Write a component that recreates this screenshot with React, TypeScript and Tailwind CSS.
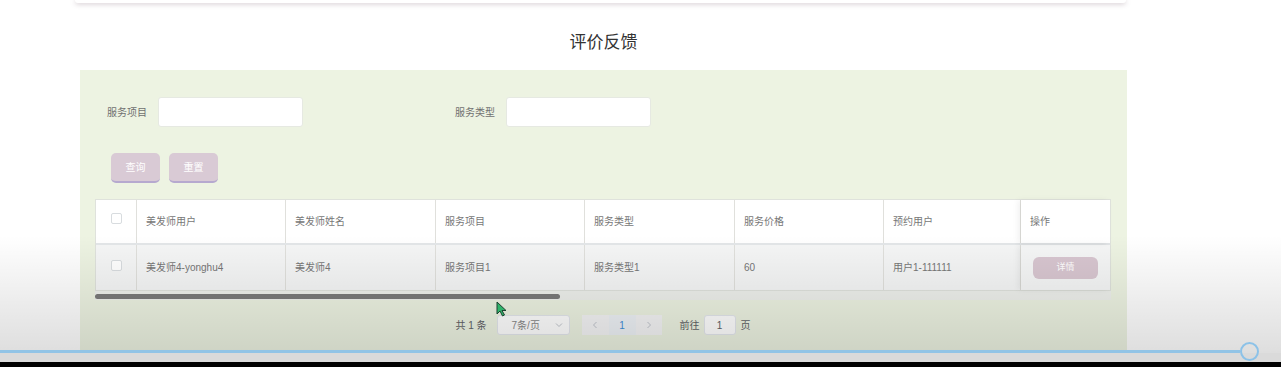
import React from 'react';

const cols = [
  { key: 'user', title: '美发师用户', w: 'w-[149px]' },
  { key: 'name', title: '美发师姓名', w: 'w-[150px]' },
  { key: 'item', title: '服务项目', w: 'w-[149px]' },
  { key: 'type', title: '服务类型', w: 'w-[150px]' },
  { key: 'price', title: '服务价格', w: 'w-[149px]' },
  { key: 'booker', title: '预约用户', w: 'w-[137px]' },
];

const row: Record<string, string> = {
  user: '美发师4-yonghu4',
  name: '美发师4',
  item: '服务项目1',
  type: '服务类型1',
  price: '60',
  booker: '用户1-111111',
};

function Checkbox() {
  return <div className="w-[11px] h-[11px] rounded-[2px] border border-[#d8dcdf] bg-white" />;
}

export default function App() {
  return (
    <div className="relative w-[1281px] h-[367px] overflow-hidden bg-white font-['Liberation_Sans','Noto_Sans_CJK_SC',sans-serif]">
      {/* tail of the card above */}
      <div className="ml-[75px] w-[1051px] h-[3px] bg-white rounded-b-[3px] shadow-[0_1px_5px_rgba(120,95,110,0.4)]" />

      <h2 className="ml-[80px] w-[1047px] mt-[30px] text-center text-[17px] leading-[20px] text-[#333]">评价反馈</h2>

      <div className="ml-[80px] mt-[17px] w-[1047px] h-[300px] bg-[#edf3e2] pt-[27px] pl-[15px] pr-[16px]">
        {/* search */}
        <div className="flex items-center h-[30px] pl-[12px] text-[10px] text-[#707070]">
          <span className="w-[40px]">服务项目</span>
          <div className="ml-[11px] w-[145px] h-[30px] rounded-[3px] bg-white border border-[#e6e9e2]" />
          <span className="ml-[152px] w-[40px]">服务类型</span>
          <div className="ml-[11px] w-[145px] h-[30px] rounded-[3px] bg-white border border-[#e6e9e2]" />
        </div>

        <div className="flex gap-[9px] mt-[26px] pl-[16px]">
          <button className="w-[49px] h-[30px] rounded-[5px] bg-[#d9cad5] border-b-2 border-[#b6a9cf] text-white text-[10px]">查询</button>
          <button className="w-[49px] h-[30px] rounded-[5px] bg-[#d9cad5] border-b-2 border-[#b6a9cf] text-white text-[10px]">重置</button>
        </div>

        {/* table */}
        <div className="mt-[16px] w-[1016px] border border-[#dfe2dc] text-[10px] text-[#777]">
          <div className="flex h-[45px] bg-white border-b-2 border-[#e3e6e8]">
            <div className="w-[41px] flex justify-center pt-[13px] border-r border-[#e0e0dc]">
              <Checkbox />
            </div>
            {cols.map((c) => (
              <div key={c.key} className={`${c.w} flex items-center pl-[9px] border-r border-[#e0e0dc]`}>
                {c.title}
              </div>
            ))}
            <div className="flex-1 flex items-center pl-[9px] shadow-[-3px_0_6px_rgba(0,0,0,0.06)]">操作</div>
          </div>
          <div className="flex h-[45px] bg-[#f5f6f6]">
            <div className="w-[41px] flex justify-center pt-[15px] border-r border-[#e0e0dc]">
              <Checkbox />
            </div>
            {cols.map((c) => (
              <div key={c.key} className={`${c.w} flex items-center pl-[9px] border-r border-[#e0e0dc]`}>
                {row[c.key]}
              </div>
            ))}
            <div className="flex-1 flex items-center pl-[12px] shadow-[-3px_0_6px_rgba(0,0,0,0.06)]">
              <button className="w-[65px] h-[22px] rounded-[6px] bg-[#d8c6d0] text-white text-[9px]">详情</button>
            </div>
          </div>
        </div>
        <div className="w-[1016px] h-[9px] pt-[3px] bg-[#eef0ec]">
          <div className="w-[465px] h-[5px] rounded-full bg-[#7a7a7a]" />
        </div>

        {/* pagination */}
        <div className="flex items-center justify-center mt-[15px] h-[20px] text-[10px] text-[#606266]">
          <span>共 1 条</span>
          <div className="ml-[10px] w-[73px] h-[20px] flex items-center justify-between pl-[14px] pr-[6px] bg-white border border-[#e4e7ed] rounded-[3px] text-[#888]">
            <span>7条/页</span>
            <svg width="8" height="8" viewBox="0 0 8 8" fill="none" stroke="#c0c4cc" strokeWidth="1">
              <path d="M1 2.5l3 3 3-3" />
            </svg>
          </div>
          <div className="ml-[12px] flex h-[20px]">
            <div className="w-[27px] flex items-center justify-center bg-[#f4f4f5] text-[#c0c4cc]">
              <svg width="6" height="8" viewBox="0 0 6 8" fill="none" stroke="currentColor" strokeWidth="1">
                <path d="M4.5 1L1.5 4l3 3" />
              </svg>
            </div>
            <div className="w-[27px] flex items-center justify-center bg-[#eef2f6] text-[#3f8fd9]">1</div>
            <div className="w-[26px] flex items-center justify-center bg-[#f4f4f5] text-[#c0c4cc]">
              <svg width="6" height="8" viewBox="0 0 6 8" fill="none" stroke="currentColor" strokeWidth="1">
                <path d="M1.5 1l3 3-3 3" />
              </svg>
            </div>
          </div>
          <span className="ml-[18px]">前往</span>
          <div className="ml-[4px] w-[32px] h-[20px] flex items-center justify-center bg-white border border-[#e4e7ed] rounded-[3px]">1</div>
          <span className="ml-[5px]">页</span>
        </div>
      </div>

      {/* video player darkening */}
      <div className="pointer-events-none absolute left-0 right-0 top-[235px] h-[118px] bg-gradient-to-b from-transparent to-black/[0.13]" />

      {/* mouse cursor */}
      <svg className="absolute left-[496px] top-[301px]" width="12" height="16" viewBox="0 0 12 16">
        <path d="M1 1v12l3-3 2.5 5 2-1-2.5-4.5H10z" fill="#2fb36a" stroke="#1d4030" strokeWidth="1" />
      </svg>

      {/* video progress */}
      <div className="absolute left-0 right-0 bottom-0 h-[17px]">
        <div className="h-[3px] w-[1240px] bg-[#92c4e6]" />
        <div className="h-[9px] bg-[#dadada]" />
        <div className="h-[5px] bg-black" />
        <div className="absolute left-[1240px] top-[-8px] w-[19px] h-[19px] rounded-full border-2 border-[#8cc2e8]" />
      </div>
    </div>
  );
}
